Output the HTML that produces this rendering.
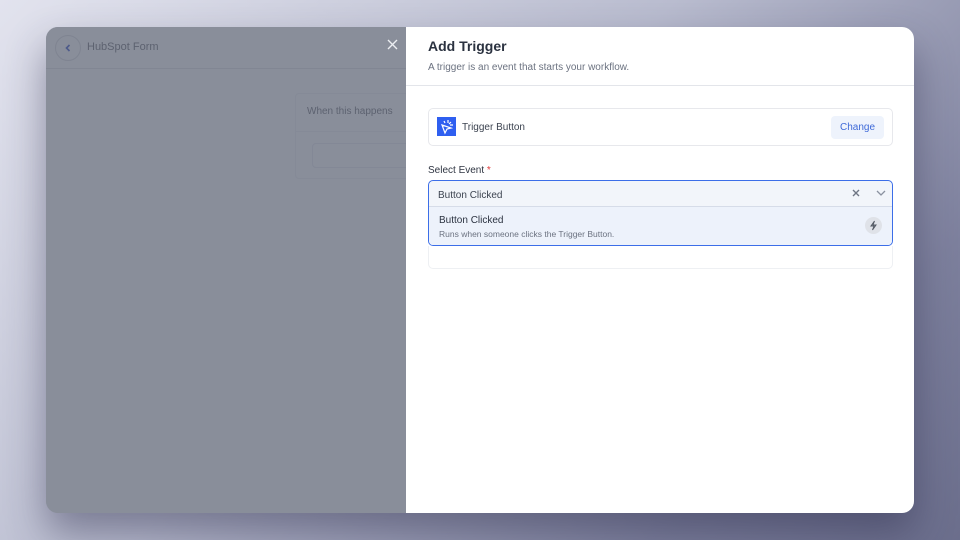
<!DOCTYPE html>
<html><head><style>
*{margin:0;padding:0;box-sizing:border-box}
svg{display:block}
body{width:960px;height:540px;overflow:hidden;font-family:"Liberation Sans",sans-serif;background:linear-gradient(135deg,#e2e3ee 0%,#b9bccf 45%,#7d809d 80%,#6b6e8c 100%);position:relative}
.card{position:absolute;left:46px;top:27px;width:868px;height:486px;border-radius:12px;overflow:hidden;background:#8b909c;box-shadow:0 20px 40px rgba(40,40,70,.45)}
.left{position:absolute;left:0;top:0;width:360px;height:486px;background:#898e9a}
.hdr{position:absolute;left:0;top:0;width:360px;height:42px;border-bottom:1px solid #818693}
.back{position:absolute;left:9px;top:8px;width:26px;height:26px;border:1px solid #7f8491;border-radius:50%}
.back svg{position:absolute;left:8px;top:7px}
.ttl{position:absolute;left:41px;top:14px;font-size:11px;color:#5d6270}
.x{position:absolute;left:341px;top:12px}
.wb{position:absolute;left:249px;top:66px;width:120px;height:86px;border:1px solid #858a97;border-radius:4px}
.wb .t{position:absolute;left:11px;top:12px;font-size:10px;color:#5d6270}
.wb .l{position:absolute;left:0;top:37px;width:120px;border-top:1px solid #858a97}
.wb .i{position:absolute;left:16px;top:49px;width:110px;height:25px;border:1px solid #838896;border-radius:4px}
.right{position:absolute;left:360px;top:0;width:508px;height:486px;background:#fff}
h1{position:absolute;left:22px;top:11px;font-size:14px;font-weight:bold;color:#2b3240}
.sub{position:absolute;left:22px;top:35px;font-size:10px;color:#6b7280}
.div{position:absolute;left:0;top:58px;width:508px;border-top:1px solid #e3e5ea}
.tb{position:absolute;left:22px;top:81px;width:465px;height:38px;border:1px solid #e7e8ec;border-radius:5px}
.ico{position:absolute;left:8px;top:8px;width:19px;height:19px;background:#2f5ff0}
.tb .n{position:absolute;left:33px;top:13px;font-size:10px;color:#3c4350}
.chg{position:absolute;right:8px;top:7px;width:53px;height:23px;background:#eef3fc;border-radius:4px;color:#3f6ad8;font-size:10px;text-align:center;line-height:23px}
.lbl{position:absolute;left:22px;top:138px;font-size:10px;color:#2f3542}
.lbl b{color:#e03a3a;font-weight:normal}
.sel{position:absolute;left:22px;top:153px;width:465px;height:66px;border:1.5px solid #3c6ee8;border-radius:5px;background:#f2f5fa;overflow:hidden}
.sel .v{position:absolute;left:9px;top:9px;font-size:10px;color:#3c4350}
.sel .cx{position:absolute;left:423px;top:8px}
.sel .dn{position:absolute;left:447px;top:9px}
.opt{position:absolute;left:0;top:25px;width:465px;height:40px;border-top:1px solid #d6dce8;background:#edf2fb}
.opt .a{position:absolute;left:10px;top:8px;font-size:10px;color:#2b3240}
.opt .b{position:absolute;left:10px;top:22px;font-size:8.5px;color:#6b7280}
.bolt{position:absolute;left:436px;top:10px;width:17px;height:17px;border-radius:50%;background:#dfe2e8}
.bolt svg{position:absolute;left:4px;top:3px}
.ghost{position:absolute;left:22px;top:219px;width:465px;height:23px;border:1px solid #eef0f3;border-top:none;border-radius:0 0 5px 5px}
</style></head><body>
<div class="card">
 <div class="left">
  <div class="hdr"><div class="back"><svg width="8" height="10" viewBox="0 0 8 10" fill="none" stroke="#4d5a8a" stroke-width="1.6"><path d="M5.5 2L2.5 5l3 3"/></svg></div><div class="ttl">HubSpot Form</div>
  <div class="x"><svg width="11" height="11" viewBox="0 0 11 11" stroke="#eceef2" stroke-width="1.4"><path d="M1 1l9 9M10 1l-9 9"/></svg></div></div>
  <div class="wb"><div class="t">When this happens</div><div class="l"></div><div class="i"></div></div>
 </div>
 <div class="right">
  <h1>Add Trigger</h1>
  <div class="sub">A trigger is an event that starts your workflow.</div>
  <div class="div"></div>
  <div class="tb"><div class="ico"><svg width="19" height="19" viewBox="0 0 19 19" fill="none" stroke="#fff" stroke-width="1.2"><path d="M5 8 L14 11 L10 12 L8 16 Z"/><path d="M11 3v3M14 5l-2 2M16 8h-3M7 4l1 2"/></svg></div><div class="n">Trigger Button</div><div class="chg">Change</div></div>
  <div class="lbl">Select Event <b>*</b></div>
  <div class="sel"><div class="v">Button Clicked</div>
   <div class="cx"><svg width="8" height="8" viewBox="0 0 8 8" stroke="#6f7684" stroke-width="1.4"><path d="M1 1l6 6M7 1l-6 6"/></svg></div>
   <div class="dn"><svg width="10" height="6" viewBox="0 0 10 6" fill="none" stroke="#8b92a0" stroke-width="1.3"><path d="M1 1l4 4 4-4"/></svg></div>
   <div class="opt"><div class="a">Button Clicked</div><div class="b">Runs when someone clicks the Trigger Button.</div><div class="bolt"><svg width="9" height="11" viewBox="0 0 9 11"><path d="M5.5 1L2 6h3l-1.5 4L7 5H4z" fill="none" stroke="#555b66" stroke-width="1"/></svg></div></div>
  </div>
  <div class="ghost"></div>
 </div>
</div>
</body></html>
